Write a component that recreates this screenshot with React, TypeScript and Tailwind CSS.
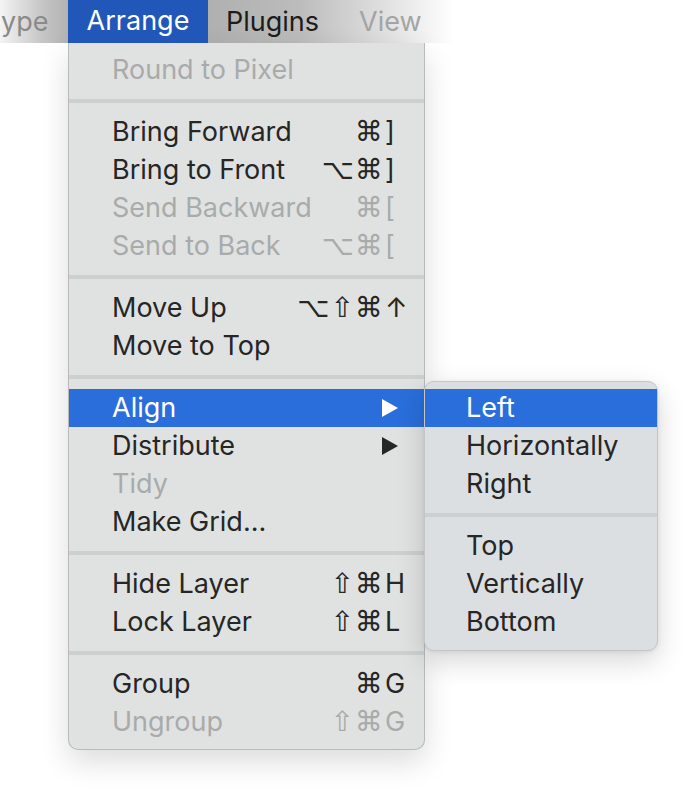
import React from "react";

type Item =
  | { kind: "sep" }
  | {
      kind: "item";
      label: string;
      mods?: string;
      key?: string;
      disabled?: boolean;
      arrow?: boolean;
      active?: boolean;
    };

const mainItems: Item[] = [
  { kind: "item", label: "Round to Pixel", disabled: true },
  { kind: "sep" },
  { kind: "item", label: "Bring Forward", mods: "⌘", key: "]" },
  { kind: "item", label: "Bring to Front", mods: "⌥⌘", key: "]" },
  { kind: "item", label: "Send Backward", mods: "⌘", key: "[", disabled: true },
  { kind: "item", label: "Send to Back", mods: "⌥⌘", key: "[", disabled: true },
  { kind: "sep" },
  { kind: "item", label: "Move Up", mods: "⌥⇧⌘", key: "↑" },
  { kind: "item", label: "Move to Top" },
  { kind: "sep" },
  { kind: "item", label: "Align", arrow: true, active: true },
  { kind: "item", label: "Distribute", arrow: true },
  { kind: "item", label: "Tidy", disabled: true },
  { kind: "item", label: "Make Grid..." },
  { kind: "sep" },
  { kind: "item", label: "Hide Layer", mods: "⇧⌘", key: "H" },
  { kind: "item", label: "Lock Layer", mods: "⇧⌘", key: "L" },
  { kind: "sep" },
  { kind: "item", label: "Group", mods: "⌘", key: "G" },
  { kind: "item", label: "Ungroup", mods: "⇧⌘", key: "G", disabled: true },
];

const subItems: Item[] = [
  { kind: "item", label: "Left", active: true },
  { kind: "item", label: "Horizontally" },
  { kind: "item", label: "Right" },
  { kind: "sep" },
  { kind: "item", label: "Top" },
  { kind: "item", label: "Vertically" },
  { kind: "item", label: "Bottom" },
];

function Arrow({ color }: { color: string }) {
  return (
    <svg width="18" height="20" viewBox="0 0 18 20" className="block">
      <path d="M1 1 L17 10 L1 19 Z" fill={color} />
    </svg>
  );
}

function SubMenu() {
  return (
    <div className="absolute left-[355px] top-[-8px] w-[234px] rounded-[10px] border border-[#c3c5c7] bg-[#dcdfe1] pt-[7px] pb-[9px] shadow-[0_10px_28px_rgba(0,0,0,0.16),0_1px_4px_rgba(0,0,0,0.08)]">
      {subItems.map((it, i) =>
        it.kind === "sep" ? (
          <div key={i} className="my-[10px] h-[4px] bg-[#cdd0d3]" />
        ) : (
          <div
            key={i}
            className={
              "flex h-[38px] items-center pl-[41px] " +
              (it.active ? "bg-[#2a6edb] text-white" : "text-[#262626]")
            }
          >
            <span className="leading-[38px]">{it.label}</span>
          </div>
        )
      )}
    </div>
  );
}

export default function App() {
  return (
    <div
      className="relative h-[797px] w-[694px] overflow-hidden bg-white text-[27px]"
      style={{ fontFamily: "Inter, 'Noto Sans', sans-serif" }}
    >
      {/* Menu bar */}
      <div className="flex h-[43px] items-center bg-[linear-gradient(to_right,#f4f4f4_0px,#c8c8c8_40px,#b2b2b2_68px,#b0b0b0_210px,#bcbcbc_300px,#dedede_380px,#ffffff_455px)]">
        <div className="w-[68px] pl-[1px] leading-[43px] text-[#8a8a8a]">ype</div>
        <div className="flex h-[43px] w-[140px] items-center justify-center bg-[#2157b8] text-white">
          Arrange
        </div>
        <div className="ml-[18px] leading-[43px] text-[#1c1c1c]">Plugins</div>
        <div className="ml-[40px] leading-[43px] text-[#a4a4a4]">View</div>
      </div>

      {/* Main menu */}
      <div className="ml-[68px] w-[357px] rounded-b-[10px] border-x border-b border-[#b9bbbb] bg-[#dfe2e1] pt-[8px] pb-[8px] shadow-[0_12px_30px_rgba(0,0,0,0.14)]">
        {mainItems.map((it, i) => {
          if (it.kind === "sep")
            return <div key={i} className="my-[10px] h-[4px] bg-[#cdd0d0]" />;
          const color = it.active
            ? "text-white"
            : it.disabled
            ? "text-[#a9abab]"
            : "text-[#262626]";
          return (
            <div
              key={i}
              className={
                "relative flex h-[38px] items-center " +
                color +
                (it.active ? " bg-[#2a6edb]" : "")
              }
            >
              <span className="flex-1 pl-[43px] leading-[38px]">{it.label}</span>
              {it.arrow ? (
                <div className="pr-[25px]">
                  <Arrow color={it.active ? "#ffffff" : "#262626"} />
                </div>
              ) : it.mods ? (
                <div className="flex items-center">
                  <span
                    className="text-right text-[28px] leading-[38px] tracking-[1px]"
                    style={{ fontFamily: "'DejaVu Sans', sans-serif" }}
                  >
                    {it.mods}
                  </span>
                  <span className="w-[40px] pl-[1px] leading-[38px]">{it.key}</span>
                </div>
              ) : null}
              {it.active && <SubMenu />}
            </div>
          );
        })}
      </div>
    </div>
  );
}
